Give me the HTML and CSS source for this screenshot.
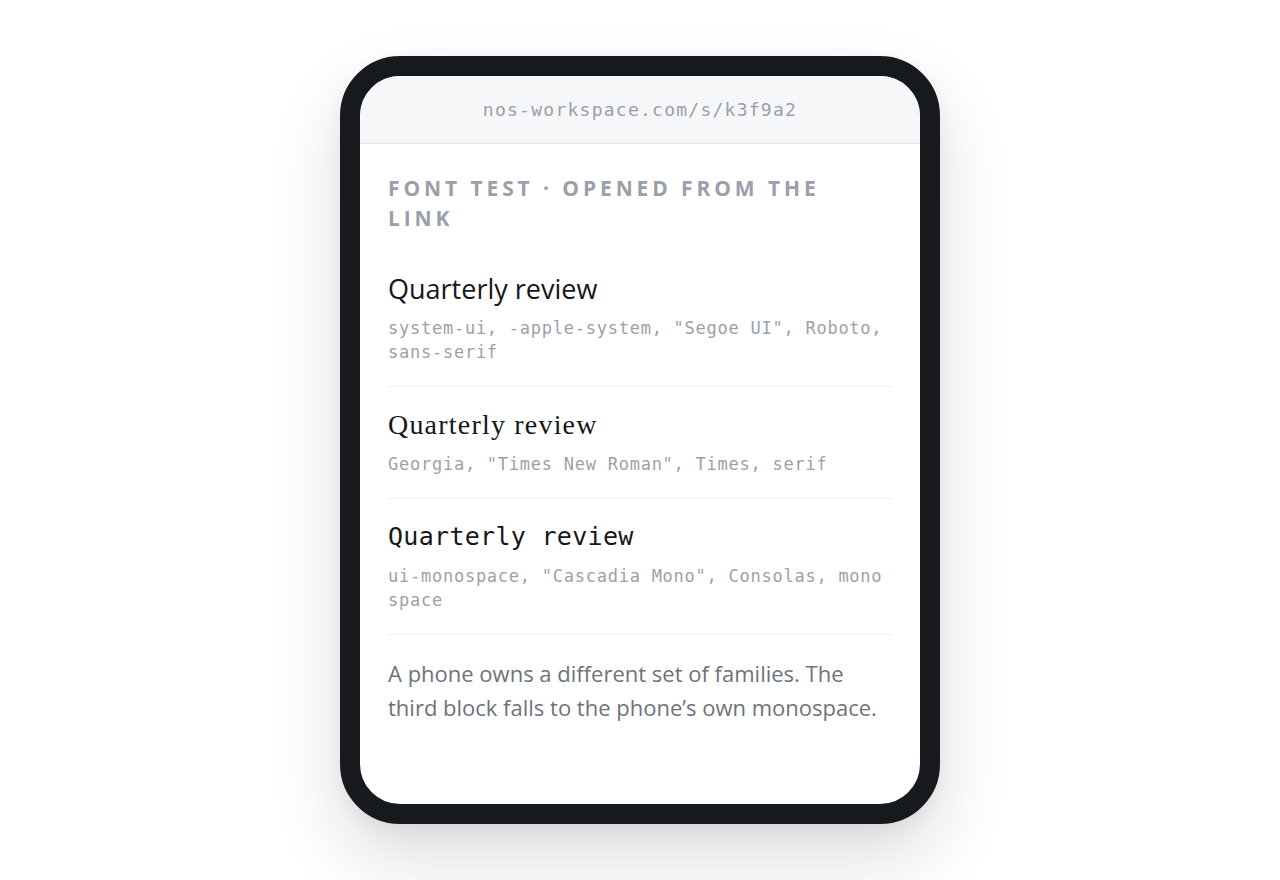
FILE: index.html
```html
<!DOCTYPE html>
<html lang="en">
<head>
<meta charset="utf-8">
<title>Font test</title>
<link rel="stylesheet" href="styles.css">
</head>
<body>
<div class="stage">
  <div class="phone">
    <div class="urlbar">nos-workspace.com/s/k3f9a2</div>
    <div class="content">
      <div class="overline">Font test · opened from the link</div>
      <div class="block">
        <div class="sample sans">Quarterly review</div>
        <div class="stack">system-ui, -apple-system, "Segoe UI", Roboto, sans-serif</div>
      </div>
      <div class="block">
        <div class="sample serif">Quarterly review</div>
        <div class="stack">Georgia, "Times New Roman", Times, serif</div>
      </div>
      <div class="block">
        <div class="sample mono">Quarterly review</div>
        <div class="stack">ui-monospace, "Cascadia Mono", Consolas, mono<br>space</div>
      </div>
      <p class="note">A phone owns a different set of families. The third block falls to the phone’s own monospace.</p>
    </div>
  </div>
</div>
</body>
</html>
```

FILE: styles.css
```css
html, body {
  margin: 0;
  padding: 0;
  background: #ffffff;
}
.stage {
  width: 1280px;
  height: 880px;
  display: flex;
  align-items: center;
  justify-content: center;
}
.phone {
  box-sizing: border-box;
  width: 600px;
  height: 768px;
  border: 20px solid #16191d;
  border-radius: 60px;
  background: #ffffff;
  overflow: hidden;
  box-shadow: 0 34px 70px rgba(20, 24, 30, 0.14), 0 8px 20px rgba(20, 24, 30, 0.05);
}
.urlbar {
  height: 67px;
  background: #f6f7f9;
  border-bottom: 1px solid #e3e5e8;
  display: flex;
  align-items: center;
  justify-content: center;
  font-family: "DejaVu Sans Mono", monospace;
  font-size: 18px;
  letter-spacing: 1.25px;
  color: #9aa0a9;
}
.content {
  padding: 29px 28px 0;
}
.overline {
  font-family: "Open Sans", sans-serif;
  font-weight: 700;
  font-size: 21px;
  line-height: 30px;
  letter-spacing: 3.9px;
  text-transform: uppercase;
  color: #9aa0aa;
  margin-bottom: 18px;
}
.block {
  padding: 20px 0 22px;
  border-bottom: 1px solid #eceef0;
}
.sample {
  line-height: 36px;
  color: #15171b;
  margin-bottom: 9px;
}
.sans {
  font-family: "Open Sans", sans-serif;
  font-size: 27px;
}
.serif {
  font-family: "Liberation Serif", serif;
  font-size: 28px;
  letter-spacing: 1.2px;
}
.mono {
  font-family: "DejaVu Sans Mono", monospace;
  font-size: 25px;
  letter-spacing: 0.3px;
}
.mono + .stack {
  margin-top: 2px;
}
.stack {
  font-family: "DejaVu Sans Mono", monospace;
  font-size: 17px;
  letter-spacing: 0.75px;
  line-height: 24px;
  color: #9ca1aa;
}
.note {
  margin: 0;
  padding-top: 21px;
  font-family: "Open Sans", sans-serif;
  font-size: 22px;
  line-height: 34px;
  color: #6e737c;
}
```
